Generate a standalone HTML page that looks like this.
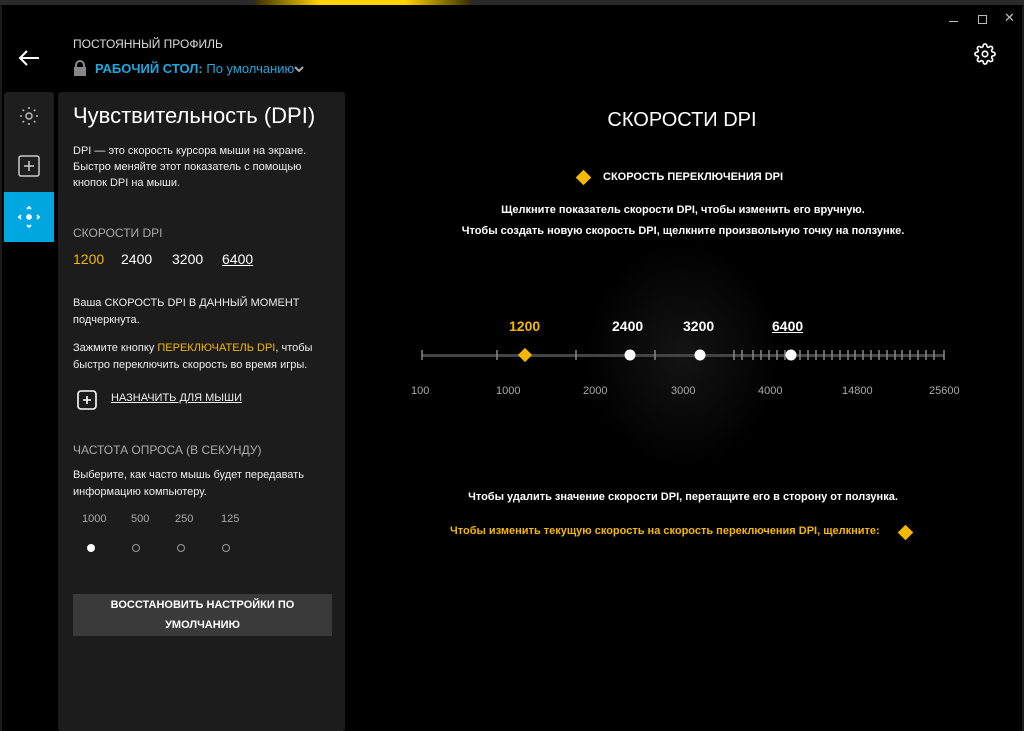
<!DOCTYPE html>
<html><head><meta charset="utf-8"><style>
*{margin:0;padding:0;box-sizing:border-box}
body{width:1024px;height:731px;background:#000;position:relative;overflow:hidden;font-family:"Liberation Sans","DejaVu Sans",sans-serif;color:#fff}
.a{position:absolute;white-space:nowrap}
</style></head><body>
<div class="a" style="left:0;top:0;width:1024px;height:5px;background:#2a2a2a"></div>
<div class="a" style="left:255px;top:0;width:215px;height:5px;background:linear-gradient(90deg,#3a3000,#ffd400 30%,#ffd400 70%,#3a3000)"></div>
<div class="a" style="left:0;top:5px;width:2px;height:726px;background:#1a1a1a"></div>
<div class="a" style="left:1022px;top:5px;width:2px;height:726px;background:#1a1a1a"></div>
<!-- window controls -->
<div class="a" style="left:949px;top:21px;width:9px;height:1px;background:#bbb"></div>
<div class="a" style="left:978px;top:15px;width:9px;height:9px;border:1.5px solid #bbb"></div>
<div class="a" style="left:1004px;top:10px;font-size:13px;color:#bbb">✕</div>
<svg class="a" style="left:974px;top:43px" width="22" height="22" viewBox="0 0 24 24" fill="none" stroke="#fff" stroke-width="1.8"><circle cx="12" cy="12" r="3"/><path d="M19.4 15a1.65 1.65 0 0 0 .33 1.820l.06.06a2 2 0 1 1-2.83 2.83l-.06-.06a1.65 1.65 0 0 0-1.82-.33 1.650 1.650 0 0 0-1 1.51V21a2 2 0 0 1-4 0v-.09A1.65 1.65 0 0 0 9 19.4a1.65 1.65 0 0 0-1.82.33l-.06.06a2 2 0 1 1-2.83-2.83l.06-.06A1.65 1.65 0 0 0 4.68 15a1.65 1.65 0 0 0-1.51-1H3a2 2 0 0 1 0-4h.09A1.65 1.65 0 0 0 4.6 9a1.65 1.65 0 0 0-.33-1.82l-.06-.06a2 2 0 1 1 2.83-2.83l.06.06A1.65 1.65 0 0 0 9 4.68a1.65 1.65 0 0 0 1-1.51V3a2 2 0 0 1 4 0v.09a1.65 1.65 0 0 0 1 1.51 1.65 1.65 0 0 0 1.82-.33l.06-.06a2 2 0 1 1 2.83 2.83l-.06.06A1.65 1.65 0 0 0 19.4 9a1.65 1.65 0 0 0 1.51 1H21a2 2 0 0 1 0 4h-.09a1.65 1.65 0 0 0-1.51 1z"/></svg>
<!-- header -->
<svg class="a" style="left:18px;top:50px" width="22" height="16" viewBox="0 0 22 16" fill="none" stroke="#fff" stroke-width="2"><path d="M21 8H2M9 1L2 8l7 7"/></svg>
<div class="a" style="left:73px;top:37px;font-size:12px;color:#ddd">ПОСТОЯННЫЙ ПРОФИЛЬ</div>
<svg class="a" style="left:73px;top:60px" width="14" height="16" viewBox="0 0 14 16"><path d="M3 7V5a4 4 0 0 1 8 0v2" stroke="#888" stroke-width="2" fill="none"/><rect x="1" y="7" width="12" height="9" fill="#888"/></svg>
<div class="a" style="left:95px;top:61px;font-size:13px;color:#1ea7e0"><b style="font-weight:600">РАБОЧИЙ СТОЛ:</b> По умолчанию</div>
<svg class="a" style="left:294px;top:66px" width="10" height="7" viewBox="0 0 10 7"><path d="M1 1l4 4 4-4" stroke="#aaa" stroke-width="2" fill="none"/></svg>
<!-- sidebar -->
<div class="a" style="left:4px;top:92px;width:50px;height:150px;background:#1e1e1e;border-radius:3px 3px 0 0"></div>
<svg class="a" style="left:17px;top:104px" width="24" height="24" viewBox="0 0 24 24" stroke="#bbb" stroke-width="1.5" fill="none"><circle cx="12" cy="12" r="3"/><path d="M12 3v2M12 19v2M3 12h2M19 12h2M5.6 5.6l1.4 1.4M17 17l1.4 1.4M5.6 18.4L7 17M17 7l1.4-1.4"/></svg>
<svg class="a" style="left:18px;top:155px" width="22" height="22" viewBox="0 0 22 22" fill="none" stroke="#ccc" stroke-width="1.5"><rect x="1" y="1" width="20" height="20" rx="2"/><path d="M11 6v10M6 11h10"/></svg>
<div class="a" style="left:4px;top:192px;width:50px;height:50px;background:#00a6e0"></div>
<svg class="a" style="left:17px;top:205px" width="24" height="24" viewBox="0 0 24 24" stroke="#fff" stroke-width="1.8" fill="none"><circle cx="12" cy="12" r="2" fill="#fff"/><path d="M10 4l2-2 2 2M10 20l2 2 2-2M4 10l-2 2 2 2M20 10l2 2-2 2"/></svg>
<!-- panel -->
<div class="a" style="left:58px;top:92px;width:287px;height:639px;background:#1c1c1c;border-radius:3px"></div>
<div class="a" style="left:73px;top:103px;font-size:22px;color:#fff">Чувствительность (DPI)</div>
<div class="a" style="left:73px;top:143px;font-size:11px;line-height:16px;color:#eee">DPI — это скорость курсора мыши на экране.<br>Быстро меняйте этот показатель с помощью<br>кнопок DPI на мыши.</div>
<div class="a" style="left:73px;top:226px;font-size:12px;color:#aaa">СКОРОСТИ DPI</div>
<div class="a" style="left:73px;top:251px;font-size:14px;color:#f5b800">1200</div>
<div class="a" style="left:121px;top:251px;font-size:14px">2400</div>
<div class="a" style="left:172px;top:251px;font-size:14px">3200</div>
<div class="a" style="left:222px;top:251px;font-size:14px;text-decoration:underline">6400</div>
<div class="a" style="left:73px;top:295px;font-size:11px;line-height:17px;color:#eee">Ваша СКОРОСТЬ DPI В ДАННЫЙ МОМЕНТ<br>подчеркнута.</div>
<div class="a" style="left:73px;top:340px;font-size:11px;line-height:17px;color:#eee">Зажмите кнопку <span style="color:#f5b800">ПЕРЕКЛЮЧАТЕЛЬ DPI</span>, чтобы<br>быстро переключить скорость во время игры.</div>
<svg class="a" style="left:77px;top:390px" width="20" height="20" viewBox="0 0 20 20" fill="none" stroke="#fff" stroke-width="1.6"><rect x="1" y="1" width="18" height="18" rx="3"/><path d="M10 6v8M6 10h8"/></svg>
<div class="a" style="left:111px;top:392px;font-size:11px;text-decoration:underline;color:#eee">НАЗНАЧИТЬ ДЛЯ МЫШИ</div>
<div class="a" style="left:73px;top:443px;font-size:12px;color:#aaa">ЧАСТОТА ОПРОСА (В СЕКУНДУ)</div>
<div class="a" style="left:73px;top:467px;font-size:11px;line-height:17px;color:#eee">Выберите, как часто мышь будет передавать<br>информацию компьютеру.</div>
<div class="a" style="left:82px;top:513px;font-size:11px;color:#aaa">1000</div>
<div class="a" style="left:131px;top:513px;font-size:11px;color:#aaa">500</div>
<div class="a" style="left:175px;top:513px;font-size:11px;color:#aaa">250</div>
<div class="a" style="left:221px;top:513px;font-size:11px;color:#aaa">125</div>
<div class="a" style="left:87px;top:544px;width:8px;height:8px;border-radius:50%;background:#fff"></div>
<div class="a" style="left:132px;top:544px;width:8px;height:8px;border-radius:50%;border:1.5px solid #999"></div>
<div class="a" style="left:177px;top:544px;width:8px;height:8px;border-radius:50%;border:1.5px solid #999"></div>
<div class="a" style="left:222px;top:544px;width:8px;height:8px;border-radius:50%;border:1.5px solid #999"></div>
<div class="a" style="left:73px;top:594px;width:259px;height:42px;background:#3a3a3a;font-size:11px;line-height:20px;text-align:center;padding-top:1px;white-space:normal;font-weight:bold">ВОССТАНОВИТЬ НАСТРОЙКИ ПО<br>УМОЛЧАНИЮ</div>
<!-- main -->
<div class="a" style="left:585px;top:240px;width:195px;height:230px;background:radial-gradient(ellipse at center,#141414,#000 70%)"></div>
<div class="a" style="left:0;top:109px;width:1364px;text-align:center;font-size:20px">СКОРОСТИ DPI</div>
<div class="a" style="left:578px;top:172px;width:11px;height:11px;background:#f5b800;transform:rotate(45deg)"></div>
<div class="a" style="left:603px;top:171px;font-size:11px;font-weight:bold">СКОРОСТЬ ПЕРЕКЛЮЧЕНИЯ DPI</div>
<div class="a" style="left:0;top:204px;width:1366px;text-align:center;font-size:11px;font-weight:bold">Щелкните показатель скорости DPI, чтобы изменить его вручную.</div>
<div class="a" style="left:0;top:225px;width:1366px;text-align:center;font-size:11px;font-weight:bold">Чтобы создать новую скорость DPI, щелкните произвольную точку на ползунке.</div>
<div class="a" style="left:509px;top:318px;font-size:14px;font-weight:bold;color:#f5b800">1200</div>
<div class="a" style="left:612px;top:318px;font-size:14px;font-weight:bold">2400</div>
<div class="a" style="left:683px;top:318px;font-size:14px;font-weight:bold">3200</div>
<div class="a" style="left:772px;top:318px;font-size:14px;font-weight:bold;text-decoration:underline">6400</div>
<svg class="a" style="left:410px;top:340px" width="550" height="30">
<rect x="12" y="14" width="522" height="3" fill="#444"/>
<g stroke="#888" stroke-width="1.5">
<path d="M12 10v10M87 10v10M166 10v10M245 10v10M324 10v10M332 10v10M343 10v10M351 10v10M359 10v10M367 10v10M375 10v10M382 10v10M390 10v10M398 10v10M406 10v10M414 10v10M422 10v10M430 10v10M438 10v10M445 10v10M453 10v10M461 10v10M469 10v10M477 10v10M485 10v10M492 10v10M500 10v10M508 10v10M516 10v10M524 10v10M534 10v10"/>
</g>
<rect x="110" y="10" width="10" height="10" fill="#f5b800" transform="rotate(45 115 15)"/>
<circle cx="220" cy="15" r="5.5" fill="#fff"/><circle cx="290" cy="15" r="5.5" fill="#fff"/><circle cx="381" cy="15" r="5.5" fill="#fff"/>
</svg>
<div class="a" style="left:411px;top:385px;font-size:11px;color:#aaa">100</div>
<div class="a" style="left:496px;top:385px;font-size:11px;color:#aaa">1000</div>
<div class="a" style="left:583px;top:385px;font-size:11px;color:#aaa">2000</div>
<div class="a" style="left:671px;top:385px;font-size:11px;color:#aaa">3000</div>
<div class="a" style="left:758px;top:385px;font-size:11px;color:#aaa">4000</div>
<div class="a" style="left:842px;top:385px;font-size:11px;color:#aaa">14800</div>
<div class="a" style="left:929px;top:385px;font-size:11px;color:#aaa">25600</div>
<div class="a" style="left:0;top:491px;width:1366px;text-align:center;font-size:11px;font-weight:bold">Чтобы удалить значение скорости DPI, перетащите его в сторону от ползунка.</div>
<div class="a" style="left:450px;top:525px;font-size:11px;font-weight:bold;color:#f5b800">Чтобы изменить текущую скорость на скорость переключения DPI, щелкните:</div>
<div class="a" style="left:900px;top:527px;width:11px;height:11px;background:#f5b800;transform:rotate(45deg)"></div>
</body></html>
